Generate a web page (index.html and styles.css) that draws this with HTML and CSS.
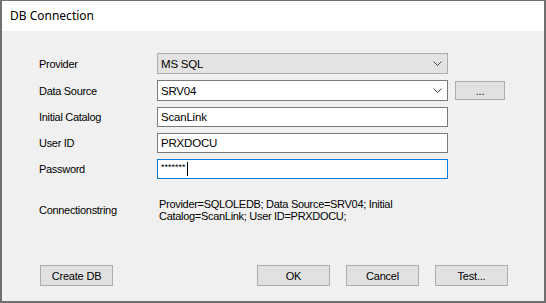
FILE: index.html
```html
<!DOCTYPE html>
<html lang="en">

<head>
    <meta charset="UTF-8">
    <meta name="viewport" content="width=device-width, initial-scale=1.0">
    <title>DB Connection</title>
    <link rel="stylesheet" href="styles.css">
</head>

<body>
    <div class="window">
        <div class="titlebar">DB Connection</div>
        <div class="content">
            <!-- Campi di connessione -->
            <div class="form">
                <div class="label">Provider</div>
                <div class="field combo disabled">
                    <span>MS SQL</span>
                    <svg class="chevron" width="9" height="5" viewBox="0 0 9 5"><polyline points="0.5,0.5 4.5,4.5 8.5,0.5" fill="none" stroke="#444" stroke-width="1"/></svg>
                </div>

                <div class="label">Data Source</div>
                <div class="field combo">
                    <span>SRV04</span>
                    <svg class="chevron" width="9" height="5" viewBox="0 0 9 5"><polyline points="0.5,0.5 4.5,4.5 8.5,0.5" fill="none" stroke="#444" stroke-width="1"/></svg>
                </div>
                <button class="btn browse">...</button>

                <div class="label">Initial Catalog</div>
                <div class="field text">ScanLink</div>

                <div class="label">User ID</div>
                <div class="field text">PRXDOCU</div>

                <div class="label">Password</div>
                <div class="field text focus"><span class="stars">*******</span><span class="caret"></span></div>
            </div>

            <!-- Stringa di connessione -->
            <div class="conn">
                <div class="conn-label">Connectionstring</div>
                <div class="conn-text">Provider=SQLOLEDB; Data Source=SRV04; Initial Catalog=ScanLink; User ID=PRXDOCU;</div>
            </div>

            <div class="buttons">
                <button class="btn">Create DB</button>
                <div class="actions">
                    <button class="btn">OK</button>
                    <button class="btn">Cancel</button>
                    <button class="btn">Test...</button>
                </div>
            </div>
        </div>
    </div>
</body>

</html>
```

FILE: styles.css
```css
body {
    margin: 0;
    font-family: "Liberation Sans", Arial, sans-serif;
    font-size: 11px;
    letter-spacing: -0.3px;
    color: #000;
}

.window {
    width: 546px;
    height: 303px;
    box-sizing: border-box;
    border: 2px solid #707070;
    border-top-width: 1px;
    background-color: #f0f0f0;
    display: flex;
    flex-direction: column;
}

.titlebar {
    height: 30px;
    line-height: 30px;
    padding-left: 8px;
    background-color: #fff;
    font-family: "Noto Sans", sans-serif;
    font-size: 12px;
    letter-spacing: 0;
}

.content {
    padding: 22px 36px 0 37px;
}

.form {
    display: grid;
    grid-template-columns: 111px 291px 50px;
    grid-template-rows: 21px 21px 20px 20px 20px;
    column-gap: 7px;
    row-gap: 6px;
}

.label {
    grid-column: 1;
    display: flex;
    align-items: center;
}

.field {
    grid-column: 2;
    box-sizing: border-box;
    border: 1px solid #7a7a7a;
    background-color: #fff;
    display: flex;
    align-items: center;
    padding-left: 3px;
    font-size: 11.5px;
    letter-spacing: -0.2px;
}

.combo {
    justify-content: space-between;
    padding-right: 5px;
}

.combo.disabled {
    background-color: #e3e3e3;
    border-color: #adadad;
}

.focus {
    border-color: #0078d7;
}

.stars {
    font-size: 9px;
    letter-spacing: 0;
    margin-top: -4px;
}

.caret {
    width: 1px;
    height: 14px;
    background-color: #000;
    margin-left: 1px;
}

.btn {
    box-sizing: border-box;
    width: 73px;
    height: 21px;
    padding: 0;
    background-color: #e1e1e1;
    border: 1px solid #adadad;
    font-family: "Liberation Sans", Arial, sans-serif;
    font-size: 11px;
    letter-spacing: -0.2px;
    color: #000;
}

.browse {
    grid-column: 3;
    width: 50px;
    height: 19px;
    align-self: center;
}

.conn {
    display: grid;
    grid-template-columns: 120px 242px;
    margin-top: 18px;
}

.conn-label {
    padding-top: 7px;
}

.conn-text {
    line-height: 12px;
    padding-top: 1px;
}

.buttons {
    display: flex;
    margin-top: 43px;
    padding-left: 1px;
}

.actions {
    margin-left: auto;
    display: flex;
    gap: 16px;
}
```
